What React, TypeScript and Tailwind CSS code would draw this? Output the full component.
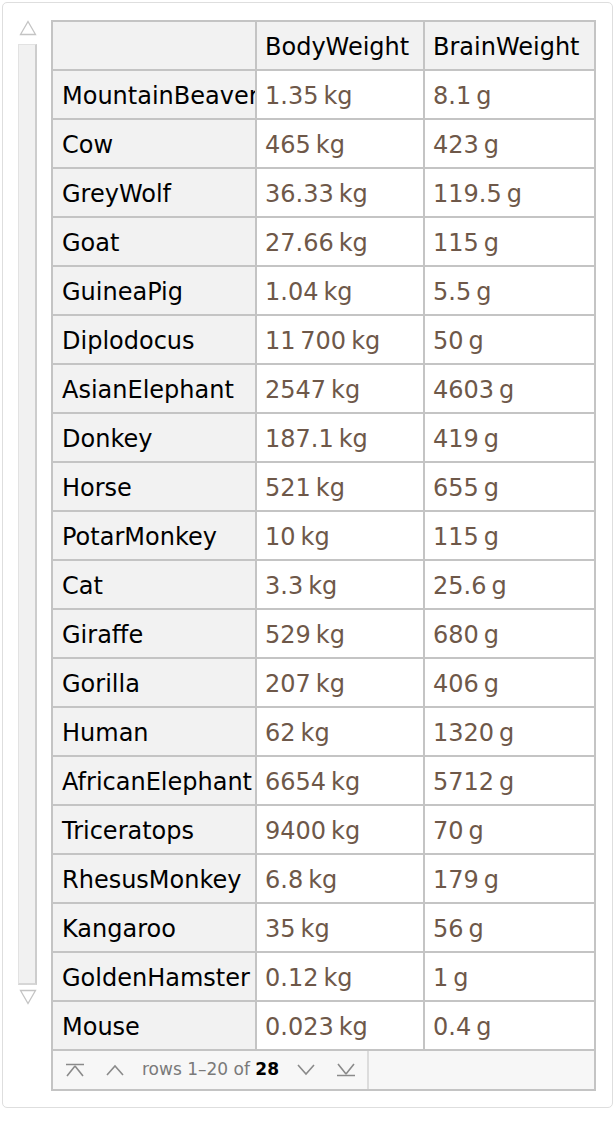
import React from 'react';

const rows: [string, string, string][] = [
  ['MountainBeaver', '1.35 kg', '8.1 g'],
  ['Cow', '465 kg', '423 g'],
  ['GreyWolf', '36.33 kg', '119.5 g'],
  ['Goat', '27.66 kg', '115 g'],
  ['GuineaPig', '1.04 kg', '5.5 g'],
  ['Diplodocus', '11\u2009700 kg', '50 g'],
  ['AsianElephant', '2547 kg', '4603 g'],
  ['Donkey', '187.1 kg', '419 g'],
  ['Horse', '521 kg', '655 g'],
  ['PotarMonkey', '10 kg', '115 g'],
  ['Cat', '3.3 kg', '25.6 g'],
  ['Giraffe', '529 kg', '680 g'],
  ['Gorilla', '207 kg', '406 g'],
  ['Human', '62 kg', '1320 g'],
  ['AfricanElephant', '6654 kg', '5712 g'],
  ['Triceratops', '9400 kg', '70 g'],
  ['RhesusMonkey', '6.8 kg', '179 g'],
  ['Kangaroo', '35 kg', '56 g'],
  ['GoldenHamster', '0.12 kg', '1 g'],
  ['Mouse', '0.023 kg', '0.4 g'],
];

const Unit: React.FC<{ v: string }> = ({ v }) => {
  const i = v.lastIndexOf(' ');
  return (
    <span>
      {v.slice(0, i)}
      <span className="ml-[5px]">{v.slice(i + 1)}</span>
    </span>
  );
};

const Pager: React.FC<{ d: string }> = ({ d }) => (
  <svg width="20" height="14" viewBox="0 0 20 14" fill="none" stroke="#8a8a8a" strokeWidth="1.6">
    <path d={d} />
  </svg>
);

export default function App() {
  return (
    <div className="w-[616px] h-[1140px] bg-white p-[2px] font-['DejaVu_Sans',sans-serif]">
      <div className="w-[611px] h-[1106px] border border-[#dedede] rounded-[5px] flex pt-[17px]">
        {/* scrollbar */}
        <div className="w-[48px] flex flex-col items-center pl-[1px]">
          <svg width="18" height="16" viewBox="0 0 18 16" className="mb-[8px]">
            <path d="M9 1.5 L16.5 14.5 L1.5 14.5 Z" fill="none" stroke="#c4c4c4" strokeWidth="1.3" />
          </svg>
          <div className="w-[19px] h-[941px] border border-[#e2e2e2] border-r-2 border-r-[#cdcdcd] border-b-2 border-b-[#d6d6d6] bg-[#f1f1f1]"></div>
          <svg width="18" height="16" viewBox="0 0 18 16" className="mt-[4px]">
            <path d="M1.5 1.5 L16.5 1.5 L9 14.5 Z" fill="none" stroke="#c4c4c4" strokeWidth="1.3" />
          </svg>
        </div>
        {/* table */}
        <div className="w-[545px] border-2 border-[#c4c4c4] h-[1071px] flex flex-col">
          <div className="flex h-[49px] border-b-2 border-[#c4c4c4] bg-[#f2f2f2] text-[24px] text-black">
            <div className="w-[204px] border-r-2 border-[#c4c4c4]"></div>
            <div className="w-[168px] border-r-2 border-[#c4c4c4] pl-[8px] pt-[3px] flex items-center">BodyWeight</div>
            <div className="flex-1 pl-[8px] pt-[3px] flex items-center">BrainWeight</div>
          </div>
          {rows.map(([name, body, brain]) => (
            <div key={name} className="flex h-[49px] border-b-2 border-[#c4c4c4] text-[24px]">
              <div className="w-[204px] border-r-2 border-[#c4c4c4] bg-[#f2f2f2] text-black pl-[9px] pt-[3px] flex items-center overflow-hidden whitespace-nowrap">
                {name}
              </div>
              <div className="w-[168px] border-r-2 border-[#c4c4c4] bg-white text-[#6e5849] pl-[8px] pt-[3px] flex items-center whitespace-nowrap">
                <Unit v={body} />
              </div>
              <div className="flex-1 bg-white text-[#6e5849] pl-[8px] pt-[3px] flex items-center whitespace-nowrap">
                <Unit v={brain} />
              </div>
            </div>
          ))}
          <div className="flex-1 flex bg-[#f7f7f7]">
            <div className="w-[316px] border-r-2 border-[#dcdcdc] flex items-center pl-[12px] gap-[20px]">
              <Pager d="M1 1.5 H19 M10 3 L2 13 M10 3 L18 13" />
              <Pager d="M2 12 L10 3 L18 12" />
              <span className="text-[17px] text-[#7a7a7a] -ml-[3px] -mr-[3px]">
                rows 1–20 of <span className="font-bold text-black">28</span>
              </span>
              <Pager d="M2 2 L10 11 L18 2" />
              <Pager d="M1 12.5 H19 M10 11 L2 1 M10 11 L18 1" />
            </div>
            <div className="flex-1"></div>
          </div>
        </div>
      </div>
    </div>
  );
}
